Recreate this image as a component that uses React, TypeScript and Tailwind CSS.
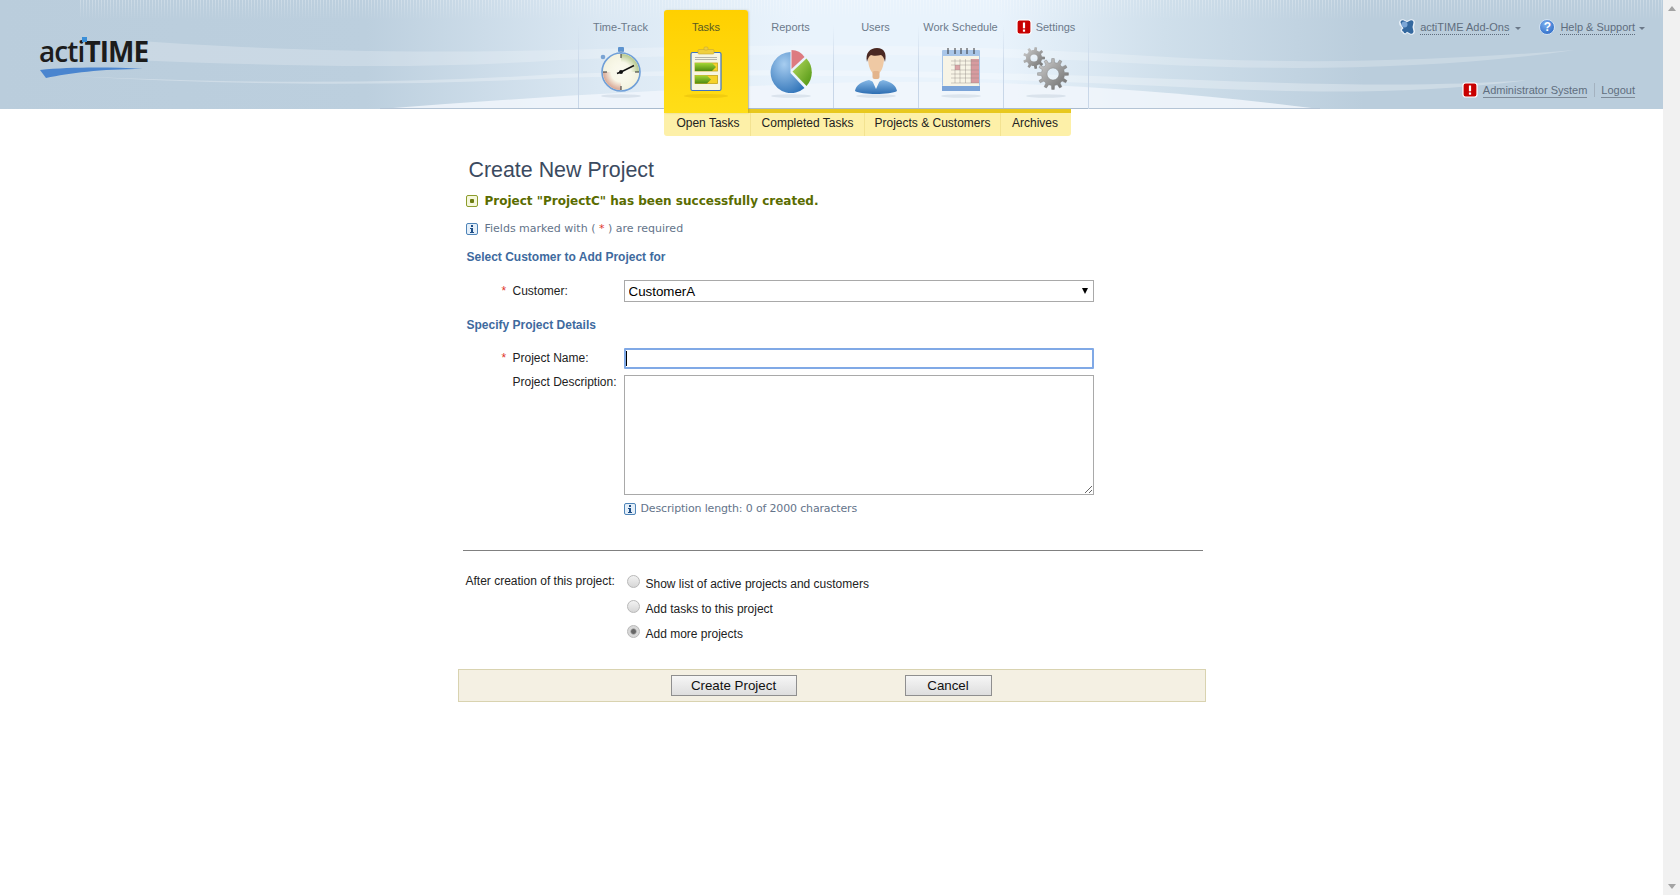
const arial = "font-['Liberation_Sans',Arial,sans-serif]";
const verdana = "font-['DejaVu_Sans',Verdana,sans-serif]";

const gearPath = (cx: number, cy: number, outer: number, inner: number, hole: number, teeth: number) => {
    const step = (Math.PI * 2) / teeth;
    let d = "";
    for (let i = 0; i < teeth; i++) {
        const a = i * step;
        const pts: [number, number][] = [
            [inner, a - step * 0.5],
            [inner, a - step * 0.27],
            [outer, a - step * 0.16],
            [outer, a + step * 0.16],
            [inner, a + step * 0.27],
        ];
        pts.forEach(([r, t], j) => {
            d += `${i === 0 && j === 0 ? "M" : "L"}${(cx + r * Math.cos(t)).toFixed(2)} ${(cy + r * Math.sin(t)).toFixed(2)}`;
        });
    }
    d += `Z M${cx + hole} ${cy}A${hole} ${hole} 0 1 0 ${cx - hole} ${cy}A${hole} ${hole} 0 1 0 ${cx + hole} ${cy}Z`;
    return d;
};

const Shadow = () => <ellipse cx="28" cy="52" rx="20" ry="1.8" fill="#5f7a94" opacity="0.14" />;

const Stopwatch = () => (
    <svg width="56" height="56" viewBox="0 0 56 56">
        <defs>
            <radialGradient id="sw-face">
                <stop offset="0" stopColor="#fbfaf0" />
                <stop offset="0.55" stopColor="#f8f7e8" />
                <stop offset="1" stopColor="#f8f7e8" stopOpacity="0" />
            </radialGradient>
        </defs>
        <Shadow />
        <rect x="25" y="3" width="6" height="5" rx="1" fill="#5d93cf" />
        <rect x="26.500" y="7" width="3" height="3" fill="#8aa9cc" />
        <circle cx="10" cy="13" r="2.300" fill="#79a3d3" />
        <circle cx="28" cy="28" r="19" fill="#f3f2df" stroke="#6f9fd8" strokeWidth="1.600" />
        <path d="M28 28 L28 10 A18 18 0 0 1 46 28 Z" fill="#b4c88e" />
        <path d="M28 28 L10 28 A18 18 0 0 0 28 46 Z" fill="#d8a694" />
        <circle cx="28" cy="28" r="18" fill="url(#sw-face)" />
        <path d="M28 10v4M28 42v4M10 28h4M42 28h4" stroke="#333" strokeWidth="1" />
        <path d="M28 28 L41 21.500" stroke="#111" strokeWidth="1.500" />
        <path d="M28 28 L24 29.500" stroke="#111" strokeWidth="1.700" />
        <circle cx="28" cy="28" r="2" fill="#111" />
    </svg>
);

const Clipboard = () => (
    <svg width="56" height="56" viewBox="0 0 56 56">
        <defs>
            <linearGradient id="cb-arrow" x1="0" y1="0" x2="0" y2="1">
                <stop offset="0" stopColor="#a4d634" />
                <stop offset="1" stopColor="#4f8a10" />
            </linearGradient>
        </defs>
        <ellipse cx="28" cy="52" rx="22" ry="2" fill="#c79a00" opacity="0.25" />
        <rect x="13" y="8.500" width="30" height="38" rx="1.500" fill="#f7f5e2" stroke="#3f74c4" strokeWidth="1.200" />
        <rect x="20" y="5.500" width="16" height="4.500" rx="1" fill="#f0cf40" stroke="#c9a830" strokeWidth="0.600" />
        <rect x="26" y="3" width="4" height="3" rx="1" fill="#f0cf40" stroke="#c9a830" strokeWidth="0.600" />
        <path d="M17 13.500h22M17 15.500h22" stroke="#9a9a90" strokeWidth="0.700" />
        <rect x="17" y="19" width="22.500" height="8" fill="#f6d22a" stroke="#c4a418" strokeWidth="0.800" />
        <path d="M17 19h17l4 4-4 4h-17z" fill="url(#cb-arrow)" />
        <rect x="17" y="31.500" width="22.500" height="8" fill="#f6d22a" stroke="#c4a418" strokeWidth="0.800" />
        <path d="M17 31.500h12l4 4-4 4h-12z" fill="url(#cb-arrow)" />
    </svg>
);

const Pie = () => (
    <svg width="56" height="56" viewBox="0 0 56 56">
        <defs>
            <radialGradient id="pie-blue" cx="0.4" cy="0.3" r="0.8">
                <stop offset="0" stopColor="#a7cdf0" />
                <stop offset="1" stopColor="#2f73b8" />
            </radialGradient>
            <linearGradient id="pie-green" x1="0" y1="0" x2="1" y2="1">
                <stop offset="0" stopColor="#b7da60" />
                <stop offset="1" stopColor="#4d9410" />
            </linearGradient>
        </defs>
        <Shadow />
        <path d="M27.500 8 A20.500 20.500 0 1 0 41.500 44 L27.500 29 Z" fill="url(#pie-blue)" />
        <path d="M28.500 6 A16 16 0 0 1 41.500 13 L28.500 25 Z" fill="#dd7b80" />
        <path d="M43.500 14.500 A20.500 20.500 0 0 1 43.500 42 L29.500 27.500 Z" fill="url(#pie-green)" />
    </svg>
);

const UserIcon = () => (
    <svg width="56" height="56" viewBox="0 0 56 56">
        <defs>
            <linearGradient id="us-coat" x1="0" y1="0" x2="0" y2="1">
                <stop offset="0" stopColor="#86b8e6" />
                <stop offset="1" stopColor="#2d6eb2" />
            </linearGradient>
        </defs>
        <Shadow />
        <path d="M7 47c1-6 6-9 14-11l7 3 7-3c8 2 13 5 14 11-6 4-36 4-42 0z" fill="url(#us-coat)" />
        <path d="M23 34l5 11 5-11-5 2z" fill="#f4f6f8" />
        <path d="M20 14c0-6 16-6 16 0 0 8-3 16-8 17-5-1-8-9-8-17z" fill="#efc9a4" />
        <rect x="24.500" y="27" width="7" height="8" rx="2" fill="#e3b48c" />
        <path d="M19 18c-2-9 3-14 10-14 7 0 10 5 8 14-1-4-2-6-4-7-4 1-8 1-10 0-2 1-3 3-4 7z" fill="#4a2822" />
    </svg>
);

const Calendar = () => (
    <svg width="56" height="56" viewBox="0 0 56 56">
        <Shadow />
        <rect x="9" y="6" width="38" height="36" rx="1" fill="#a9c6e8" />
        <rect x="9" y="42" width="38" height="5" fill="#7ba4d8" />
        <rect x="10" y="12" width="36" height="30" fill="#f7f4e6" />
        <rect x="22" y="21" width="5" height="5" fill="#dba4a6" />
        <rect x="38" y="15" width="8" height="24" fill="#d79ba0" />
        <path d="M18 17h28M18 21h28M18 26h28M18 30h28M18 34h28M18 39h28M22 15v24M27 15v24M32.500 15v24M38 15v24" stroke="#8d8780" strokeWidth="0.400" />
        <path d="M15 4v6M22 4v6M28 4v6M34 4v6M41 4v6" stroke="#222" strokeWidth="0.900" />
    </svg>
);

const Gears = () => (
    <svg width="56" height="56" viewBox="0 0 56 56">
        <defs>
            <linearGradient id="gr-steel" x1="0" y1="0" x2="1" y2="1">
                <stop offset="0" stopColor="#d3d3d3" />
                <stop offset="1" stopColor="#686868" />
            </linearGradient>
        </defs>
        <Shadow />
        <path d={gearPath(16, 14, 11, 8, 3.600, 9)} fill="url(#gr-steel)" fillRule="evenodd" />
        <path d={gearPath(35, 30, 15.500, 11.500, 6, 12)} fill="url(#gr-steel)" fillRule="evenodd" stroke="#777" strokeWidth="0.400" />
    </svg>
);

const Warn = () => (
    <svg width="16" height="16" viewBox="0 0 16 16" className="shrink-0">
        <rect x="1" y="1" width="14" height="14" rx="2.500" fill="#c80000" stroke="#fff" strokeWidth="1.200" />
        <rect x="6.900" y="3.500" width="2.200" height="5.800" fill="#fff" />
        <rect x="6.900" y="10.500" width="2.200" height="2.200" fill="#fff" />
    </svg>
);

const Puzzle = () => (
    <svg width="18" height="18" viewBox="0 0 18 18" className="shrink-0">
        <path d="M1 4.500a3.500 3.500 0 0 1 5-3l3 1.500 3-1.500a3.500 3.500 0 0 1 5 3l-1 4.500 1 4.500a3.500 3.500 0 0 1-5 3l-3-1.500-1.500 1.500a3 3 0 0 1-3-2 3 3 0 0 1-2-3l1.500-1.500-2.500-3z" fill="#e8f0f8" />
        <path d="M2.500 4.500a2.300 2.300 0 0 1 3.300-2l3.200 1.700 3.200-1.700a2.300 2.300 0 0 1 3.300 2l-1 4.500 1 4.500a2.300 2.300 0 0 1-3.300 2l-3.200-1.700-1.500 1.500a2 2 0 0 1-2-1.500 2 2 0 0 1-1.500-2l1.500-1.500-2-3.800z" fill="#33689f" />
        <circle cx="6.500" cy="6.500" r="3" fill="#7ba6d6" />
    </svg>
);

const Caret = () => <span className="ml-[6px] mt-[2px] h-0 w-0 border-x-[3.5px] border-t-[3.5px] border-x-transparent border-t-[#6b7888]" />;

const InfoIcon = () => (
    <svg width="12" height="12" viewBox="0 0 12 12" className="mb-[1px] shrink-0">
        <rect x="0.500" y="0.500" width="11" height="11" rx="1.500" fill="#e4eff9" stroke="#4f84b8" />
        <rect x="5" y="2" width="2" height="2" fill="#1f4f88" />
        <path d="M4 5h3v4h1v1h-4v-1h1v-3h-1z" fill="#1f4f88" />
    </svg>
);

const OkIcon = () => (
    <svg width="12" height="12" viewBox="0 0 12 12" className="mb-[1px] shrink-0">
        <rect x="0.500" y="0.500" width="11" height="11" rx="1.500" fill="#f5f7dc" stroke="#8c9c2c" />
        <rect x="4" y="4" width="4" height="4" rx="1" fill="#6c7c10" />
    </svg>
);

const HeaderArt = () => (
    <svg className="absolute inset-0 h-full w-full" viewBox="0 0 1663 109" preserveAspectRatio="none">
        <path d="M140 41C300 52 420 53 560 50C700 46 900 40 1150 56C1300 66 1450 60 1575 50C1450 68 1300 72 1150 64C900 50 700 54 560 60C420 70 280 66 130 60Z" fill="#fff" opacity="0.22" />
        <path d="M70 76C250 84 400 84 560 74C800 66 1000 72 1200 80C1350 86 1450 86 1530 80C1400 96 1300 92 1200 88C1000 78 800 72 560 78C400 86 250 86 70 76Z" fill="#fff" opacity="0.28" />
        <path d="M380 109C520 98 660 90 800 84C960 78 1120 84 1320 109Z" fill="#f1f6fc" opacity="0.85" />
        <path d="M380 108.500H1320" stroke="#b4c4d5" strokeWidth="1" />
    </svg>
);

const tabs = [
    { label: "Time-Track", icon: <Stopwatch /> },
    { label: "Tasks", icon: <Clipboard />, active: true },
    { label: "Reports", icon: <Pie /> },
    { label: "Users", icon: <UserIcon /> },
    { label: "Work Schedule", icon: <Calendar /> },
    { label: "Settings", icon: <Gears />, warn: true },
];

const Tab = ({ label, icon, active, warn }: { label: string; icon: React.ReactNode; active?: boolean; warn?: boolean }) =>
    active ? (
        <div className="relative z-10 ml-px flex h-[103px] w-[84px] flex-col items-center rounded-t-[3px] bg-[linear-gradient(180deg,#ffd000,#ffde18)] pt-[10px] shadow-[1px_0_2px_rgba(120,100,0,0.25)]">
            <div className="h-[14px] text-[11px] leading-[14px] text-[#5a5a22]">{label}</div>
            <div className="mt-[10px]">{icon}</div>
        </div>
    ) : (
        <div className="flex h-[99px] w-[85px] flex-col items-center border-b border-b-[#a9bbce] bg-[linear-gradient(180deg,transparent_15%,#c9d7e8_60%)] bg-[length:1px_100%] bg-no-repeat pt-[10px]">
            <div className="flex h-[14px] items-center gap-[4px] whitespace-nowrap text-[11px] leading-[14px] text-[#6c7a8b]">
                {warn && <Warn />}
                {label}
            </div>
            <div className="mt-[10px]">{icon}</div>
        </div>
    );

const Header = () => (
    <header className={`relative flex h-[109px] bg-[linear-gradient(90deg,#bacddc_0,#bccfde_22%,#dbe8f3_36%,#e9f3fc_48%,#e9f3fc_60%,#cfdfeb_70%,#bacddc_82%)] ${arial}`}>
        <HeaderArt />
        <div className="absolute left-[80px] right-0 top-0 h-5 bg-[repeating-linear-gradient(90deg,rgba(255,255,255,0.28)_0,rgba(255,255,255,0.28)_1px,transparent_1px,transparent_3px)] [mask-image:linear-gradient(180deg,#000,transparent)]" />
        <div className="relative w-[578px] shrink-0 pl-[39px] pt-[31px]">
            <div className="relative h-[40px] w-[110px] font-['Open_Sans',sans-serif] text-[28px] font-bold leading-[40px] tracking-[-0.9px] text-[#1c1c1c]">
                <span className="font-semibold">acti</span>TIME
                <span className="absolute left-[43px] top-[6px] h-[5px] w-[5px] bg-[#3b8fd8]" />
            </div>
            <svg width="106" height="12" viewBox="0 0 104 12" className="-mt-[4px] block">
                <path d="M0 3C30 0 70 0 103 2C60 2 30 6 6 11Z" fill="#4a85cf" />
            </svg>
        </div>
        <nav className="relative flex h-full w-[511px] shrink-0 items-start pt-[10px]">
            {tabs.map((tab) => (
                <Tab key={tab.label} {...tab} />
            ))}
            <span className="h-[99px] w-px bg-[linear-gradient(180deg,transparent_15%,#c9d7e8_60%)]" />
        </nav>
        <div className="relative flex flex-1 flex-col items-end pr-[18px] pt-[18px] text-[11px] leading-[14px] text-[#5f6d7e]">
            <div className="flex items-center">
                <Puzzle />
                <span className="ml-[4px] border-b border-dotted border-[#5f6d7e]">actiTIME Add-Ons</span>
                <Caret />
                <span className="ml-[18px] flex h-[16px] w-[16px] items-center justify-center rounded-full border border-[#cfe0f2] bg-[radial-gradient(circle_at_40%_30%,#7cb0ef,#1f5fc0)] text-[12px] font-bold leading-none text-white">?</span>
                <span className="ml-[5px] border-b border-dotted border-[#5f6d7e]">Help &amp; Support</span>
                <span className="-ml-[2px] flex"><Caret /></span>
            </div>
            <div className="mr-[10px] mt-[46px] flex items-center">
                <Warn />
                <span className="ml-[5px] border-b border-[#7d8a98]">Administrator System</span>
                <span className="ml-[7px] mr-[6px] h-[14px] w-px bg-[#a4b2c0]" />
                <span className="border-b border-[#7d8a98]">Logout</span>
            </div>
        </div>
    </header>
);

const subItems = [
    { label: "Open Tasks", width: "w-[86px] pl-[2px]" },
    { label: "Completed Tasks", width: "w-[114px]" },
    { label: "Projects & Customers", width: "w-[136px]" },
    { label: "Archives", width: "w-[71px] pr-[2px]" },
];

const SubMenu = () => (
    <div className={`pl-[664px] ${arial}`}>
        <div className="flex h-[27px] w-[407px] rounded-b-[3px] border-t-4 border-t-[#e8c81e] bg-[#fdf0a8]">
            {subItems.map((item, i) => (
                <div key={item.label} className={`${item.width} flex items-center justify-center pb-[4px] text-[12px] text-[#222] ${i > 0 ? "border-l border-[#f3e391]" : ""}`}>
                    {item.label}
                </div>
            ))}
        </div>
    </div>
);

const SectionTitle = ({ children, className }: { children: React.ReactNode; className: string }) => (
    <div className={`${className} h-[14px] pl-[9px] text-[12px] font-bold leading-[14px] text-[#3e6a9e]`}>{children}</div>
);

const FieldLabel = ({ children, required }: { children: React.ReactNode; required?: boolean }) => (
    <div className="flex pl-[44px] text-[12px] leading-[14px] text-[#222]">
        <span className="w-[11px] text-[#e0352b]">{required ? "*" : ""}</span>
        {children}
    </div>
);

const Radio = ({ label, checked }: { label: string; checked?: boolean }) => (
    <label className="flex h-[25px] items-center pl-[3px] text-[12px] text-[#222]">
        <input
            type="radio"
            name="after"
            defaultChecked={checked}
            className="mb-[4px] mr-[6px] h-[13px] w-[13px] appearance-none rounded-full border border-[#b8b8b8] bg-[linear-gradient(180deg,#f2f2f2,#d6d6d6)] checked:bg-[radial-gradient(circle,#666_0,#666_25%,#d8d8d8_45%)]"
        />
        {label}
    </label>
);

const ProjectForm = () => (
    <main className={`mx-auto w-[748px] ${arial}`}>
        <h1 className="ml-[11px] mt-[22px] h-[24px] text-[21.4px] leading-[24px] text-[#3b4a60]">Create New Project</h1>
        <div className={`ml-[8px] mt-[12px] flex h-[14px] items-center gap-[7px] text-[12px] font-bold text-[#5a6c00] ${verdana}`}>
            <OkIcon />
            Project "ProjectC" has been successfully created.
        </div>
        <div className={`ml-[8px] mt-[14px] flex h-[14px] items-center gap-[7px] text-[11px] text-[#64748a] ${verdana}`}>
            <InfoIcon />
            <span>
                Fields marked with ( <span className="text-[#e0352b]">*</span> ) are required
            </span>
        </div>
        <SectionTitle className="mt-[14px]">Select Customer to Add Project for</SectionTitle>
        <div className="mt-[16px] grid grid-cols-[166px_470px] items-center">
            <FieldLabel required>Customer:</FieldLabel>
            <div className="relative">
                <select className="block h-[22px] w-full appearance-none border border-[#a9a9a9] bg-white pl-[4px] pt-[1px] text-[13.33px] text-black outline-none">
                    <option>CustomerA</option>
                </select>
                <span className="absolute right-[6px] top-[8px] h-0 w-0 border-x-[3.5px] border-t-[6px] border-x-transparent border-t-black" />
            </div>
        </div>
        <SectionTitle className="mt-[16px]">Specify Project Details</SectionTitle>
        <div className="mt-[16px] grid grid-cols-[166px_470px] items-start">
            <div className="pt-[3px]">
                <FieldLabel required>Project Name:</FieldLabel>
            </div>
            <div className="relative">
                <input autoFocus className="block h-[21px] w-full rounded-[1px] border-2 border-[#80a9e6] bg-white px-[1px] text-[13px] text-black caret-transparent outline-none" />
                <span className="absolute left-[2px] top-[3px] h-[15px] w-px bg-black" />
            </div>
        </div>
        <div className="mt-[6px] grid grid-cols-[166px_470px]">
            <FieldLabel>Project Description:</FieldLabel>
            <textarea className="block h-[120px] w-full border border-[#a9a9a9] bg-white outline-none" />
        </div>
        <div className="mt-[7px] grid grid-cols-[166px_470px]">
            <span />
            <div className={`flex h-[14px] items-center gap-[5px] text-[11px] tracking-[-0.16px] text-[#64748a] ${verdana}`}>
                <InfoIcon />
                Description length: 0 of 2000 characters
            </div>
        </div>
        <hr className="ml-[5px] mr-[3px] mt-[34px] border-t border-[#808080]" />
        <div className="mt-[20px] grid grid-cols-[166px_1fr]">
            <div className="pl-[8px] pt-[3px] text-[12px] leading-[14px] text-[#222]">After creation of this project:</div>
            <div>
                <Radio label="Show list of active projects and customers" />
                <Radio label="Add tasks to this project" />
                <Radio label="Add more projects" checked />
            </div>
        </div>
        <div className="mt-[23px] flex h-[33px] items-center gap-[108px] border border-[#d9d3b0] bg-[#f4f0e3] pl-[212px]">
            <button className="h-[21px] w-[126px] border border-[#8f8f8f] bg-[linear-gradient(180deg,#f6f6f6,#dedede)] text-[13.33px] leading-none text-[#111]">Create Project</button>
            <button className="h-[21px] w-[87px] border border-[#8f8f8f] bg-[linear-gradient(180deg,#f6f6f6,#dedede)] text-[13.33px] leading-none text-[#111]">Cancel</button>
        </div>
    </main>
);

const Scrollbar = () => (
    <div className="flex w-[17px] shrink-0 flex-col items-center justify-between bg-[#f1f1f1] py-[6px]">
        <span className="h-0 w-0 border-x-[4px] border-b-[5px] border-x-transparent border-b-[#a3a3a3]" />
        <span className="h-0 w-0 border-x-[4px] border-t-[5px] border-x-transparent border-t-[#a3a3a3]" />
    </div>
);

export default function App() {
    return (
        <div className="flex h-screen overflow-hidden bg-white">
            <div className="min-w-0 flex-1">
                <Header />
                <SubMenu />
                <ProjectForm />
            </div>
            <Scrollbar />
        </div>
    );
}
